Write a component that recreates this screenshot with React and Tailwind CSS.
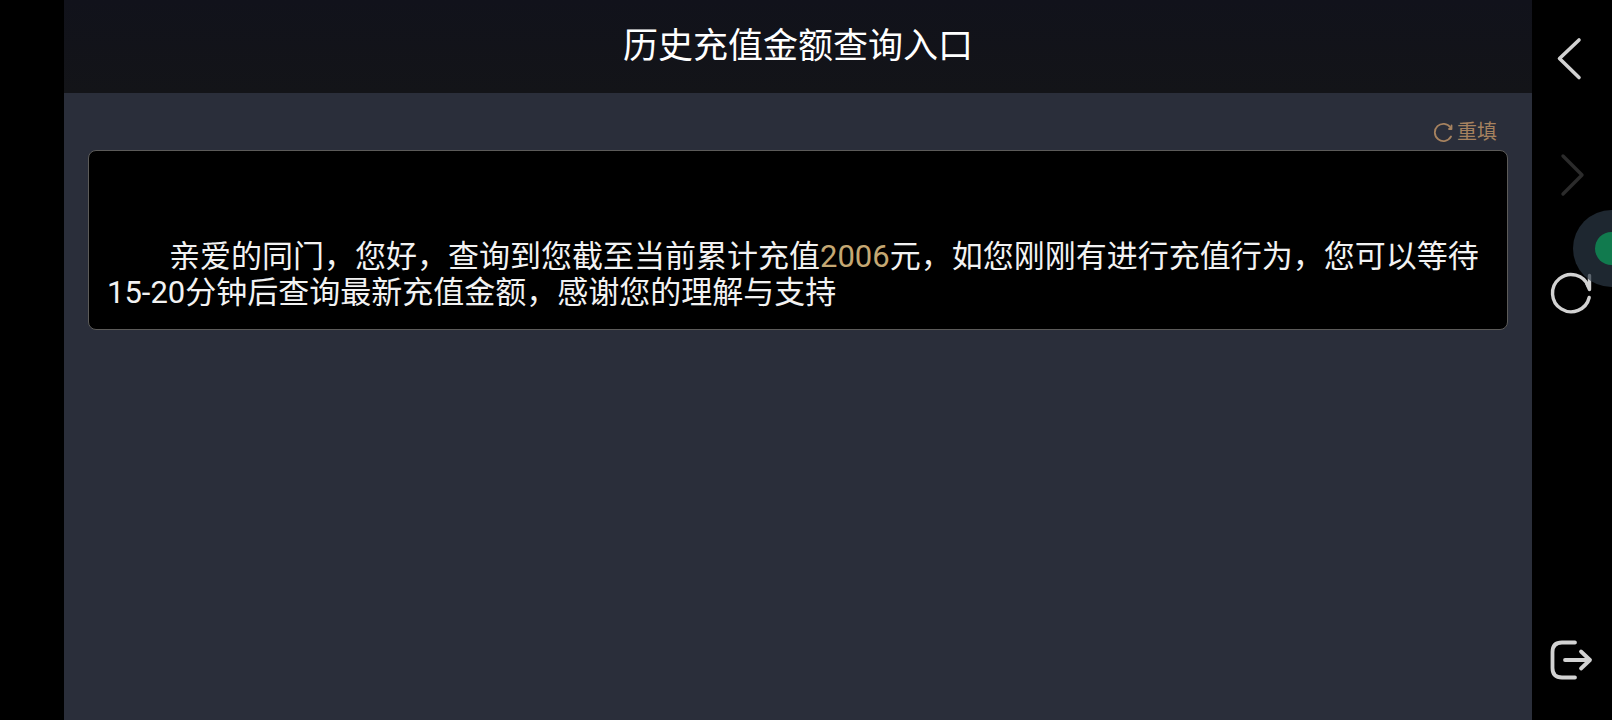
const ICON = "fill-none stroke-current"

const BackIcon = () => (
    <svg className={ICON} width="48" height="48" viewBox="0 0 48 48" strokeWidth="3.6" strokeLinecap="round" strokeLinejoin="round">
        <path d="M31 6 11.500 24.500 31 43.500" />
    </svg>
)

const ForwardIcon = () => (
    <svg className={ICON} width="48" height="48" viewBox="0 0 48 48" strokeWidth="3.4" strokeLinecap="round" strokeLinejoin="round">
        <path d="M15 5 34 24 15 43" />
    </svg>
)

const RefreshIcon = () => (
    <svg className={ICON} width="48" height="48" viewBox="0 0 48 48" strokeWidth="3.4" strokeLinecap="round" strokeLinejoin="round">
        <path d="M41.200 29.500A18.600 18.600 0 1 1 40.500 18.500" />
        <path d="M41.500 7.500V21.500L39 16" />
    </svg>
)

const ExitIcon = () => (
    <svg className={ICON} width="48" height="48" viewBox="0 0 48 48" strokeWidth="3.8" strokeLinecap="round" strokeLinejoin="round">
        <path d="M27 6.500H14Q4.500 6.500 4.500 16V32Q4.500 41.500 14 41.500H27" />
        <path d="M17 24H42M33 15.500 42 24 33 32.500" />
    </svg>
)

const RefillIcon = () => (
    <svg className={ICON} width="20" height="20" viewBox="0 0 20 20" strokeWidth="1.8" strokeLinecap="round" strokeLinejoin="round">
        <path d="M18 14.500A8.600 8.600 0 1 1 17.500 5.500" />
        <path d="M18.500 3.500V7H16" />
    </svg>
)

const Toolbar = () => {
    return (
        <nav className="flex w-20 shrink-0 flex-col items-center bg-black pt-[34px] pb-9 text-[#d2d2d2]">
            <button type="button" aria-label="后退" className="cursor-pointer"><BackIcon /></button>
            <button type="button" aria-label="前进" disabled className="mt-[69px] text-[#2b2b2b]"><ForwardIcon /></button>
            <button type="button" aria-label="刷新" className="mt-[69px] cursor-pointer"><RefreshIcon /></button>
            <button type="button" aria-label="退出" className="mt-auto cursor-pointer"><ExitIcon /></button>
        </nav>
    )
}

const App = () => {
    return (
        <div className="flex min-h-screen bg-black font-[Roboto,'Noto_Sans_CJK_SC',sans-serif]">

            <main className="ml-16 flex min-w-0 flex-1 flex-col bg-[#2a2e3a]">
                <header className="flex h-[93px] items-center justify-center bg-linear-to-b from-[#11121b] to-[#131418]">
                    <h1 className="text-[35px] leading-10 text-white">历史充值金额查询入口</h1>
                </header>

                <section className="px-6 pt-6">
                    <div className="flex justify-end pr-[11px] pb-[3px]">
                        <button type="button" className="flex cursor-pointer items-center gap-1 text-[20px] leading-[30px] text-[#a6825f]">
                            <RefillIcon />
                            重填
                        </button>
                    </div>

                    <div className="rounded-lg border border-[#5c5b59] bg-black px-[18px] pt-[88px] pb-[18px]">
                        <p className="indent-[2em] text-[31px] leading-9 text-[#f2f2f2]">
                            亲爱的同门，您好，查询到您截至当前累计充值<span className="text-[#c5a873]">2006</span>元，如您刚刚有进行充值行为，您可以等待15-20分钟后查询最新充值金额，感谢您的理解与支持
                        </p>
                    </div>
                </section>
            </main>

            <Toolbar />

            {/* floating assistant bubble, half off screen */}
            <button type="button" aria-label="悬浮球" className="fixed top-[210px] -right-[38px] flex size-[77px] cursor-pointer items-center justify-center rounded-full bg-[#2b3845]/70">
                <span className="size-[33px] rounded-full bg-[#117a4e]"></span>
            </button>
        </div>
    )
}
export default App
